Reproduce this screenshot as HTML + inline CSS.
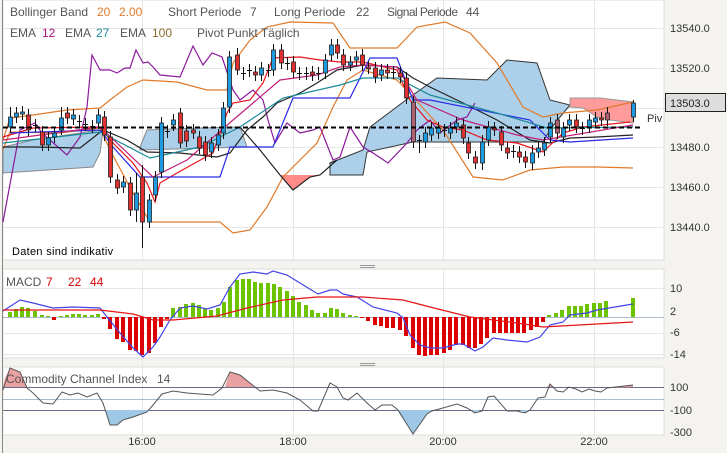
<!DOCTYPE html>
<html><head><meta charset="utf-8"><style>
html,body{margin:0;padding:0;width:727px;height:453px;overflow:hidden;background:#f4f3ef;font-family:"Liberation Sans",sans-serif}
svg{position:absolute;left:0;top:0}
</style></head><body>
<svg id="s" width="727" height="453" viewBox="0 0 727 453" xmlns="http://www.w3.org/2000/svg" font-family="Liberation Sans, sans-serif">
<rect x="3" y="0" width="661" height="260" fill="#fff" stroke="#ddd"/>
<rect x="3" y="269" width="661" height="89" fill="#fff" stroke="#ddd"/>
<rect x="3" y="367" width="661" height="68" fill="#fff" stroke="#ddd"/>
<line x1="2.5" y1="0" x2="2.5" y2="453" stroke="#888"/>
<g stroke="#e6e6e6" stroke-width="1">
<line x1="3" y1="28.5" x2="664" y2="28.5"/><line x1="3" y1="68.5" x2="664" y2="68.5"/><line x1="3" y1="108.5" x2="664" y2="108.5"/><line x1="3" y1="147.5" x2="664" y2="147.5"/><line x1="3" y1="187.5" x2="664" y2="187.5"/><line x1="3" y1="227.5" x2="664" y2="227.5"/>
<line x1="3" y1="288.5" x2="664" y2="288.5"/><line x1="3" y1="333.5" x2="664" y2="333.5"/><line x1="3" y1="354.5" x2="664" y2="354.5"/>
<line x1="142.5" y1="0" x2="142.5" y2="260"/><line x1="293.5" y1="0" x2="293.5" y2="260"/><line x1="443.5" y1="0" x2="443.5" y2="260"/><line x1="594.5" y1="0" x2="594.5" y2="260"/>
<line x1="142.5" y1="269" x2="142.5" y2="435"/><line x1="293.5" y1="269" x2="293.5" y2="435"/><line x1="443.5" y1="269" x2="443.5" y2="435"/><line x1="594.5" y1="269" x2="594.5" y2="435"/>
</g>
<polygon fill="#9fc8e6" fill-opacity="0.85" stroke="#888" points="3,147 33,140 100,130 103,130 100,153 93,167 3,173"/>
<polygon fill="#9fc8e6" fill-opacity="0.85" stroke="#888" points="140,147 147,130 200,128 240,127 247,147 140,150"/>
<polygon fill="#9fc8e6" fill-opacity="0.85" stroke="#333" points="330,163 363,150 370,127 410,97 437,78 487,80 507,60 537,63 550,100 570,105 560,117 550,130 543,142 413,142 367,152 363,175 330,175"/>
<polygon fill="#ff8a8a" fill-opacity="0.85" stroke="#999" points="570,98 600,98 633,102 633,123 610,120 597,117 583,108 570,107"/>
<polygon fill="#ff8a8a" points="280,175 320,175 310,177 293,190"/>
<g fill="none" stroke-width="1.2">
<polyline stroke="#e07a2a" points="3,140 10,118 33,115 67,110 100,108 110,100 127,87 143,80 177,82 207,90 227,90 233,63 250,40 267,27 290,22 333,23 350,48 397,48 417,27 445,22 470,33 497,63 523,107 543,117 563,113 597,110 633,102"/>
<polyline stroke="#e07a2a" points="3,150 10,132 60,133 100,128 110,150 133,193 150,222 220,222 233,233 250,230 267,207 283,177 317,143 333,107 347,80 363,70 397,80 413,97 443,130 473,177 503,180 530,170 563,167 597,167 633,168"/>
<polyline stroke="#8a1a9a" points="3,222 20,130 35,123 42,133 67,155 80,137 87,107 92,55 100,70 110,70 117,73 125,68 130,68 136,50 143,63 148,62 153,67 160,75 180,77 193,46 203,65 212,53 222,57 233,90 240,100 253,90 263,100 268,120 275,143 287,123 300,133 313,130 320,127 333,160 340,157 350,127 363,147 373,153 388,163 407,143 417,130 430,120 440,133 457,120 467,117 475,103"/>
<polyline stroke="#222" points="3,147 33,147 80,148 103,130 127,140 147,152 180,153 217,157 230,153 247,130 263,117 277,103 300,93 317,83 337,70 363,65 397,67 413,78 430,87 463,103 497,120 530,140 550,143 570,138 597,137 633,135"/>
<polyline stroke="#222" points="240,127 260,150 280,175 293,190 310,177 320,175 337,160 330,163"/>
<polyline stroke="#e8141e" points="3,137 33,128 100,127 110,140 133,163 147,183 155,202 160,183 177,173 213,153 227,113 233,103 250,100 263,83 273,58 300,57 320,60 340,62 363,62 397,70 410,100 427,120 443,127 463,130 487,140 517,143 543,152 563,133 583,127 630,122"/>
<polyline stroke="#2a2ae8" points="10,133 100,130 113,147 140,177 220,177 230,147 273,147 293,98 350,98 370,58 397,58 413,100 430,100 530,120 550,140 570,142 633,138"/>
<polyline stroke="#1a8a9a" points="3,143 100,132 150,158 200,147 240,127 283,98 340,85 363,78 397,78 430,95 497,113 547,128 633,127"/>
<polyline stroke="#c0207a" points="3,140 100,127 153,177 187,160 233,120 280,80 317,75 340,67 363,65 397,67 417,100 463,120 517,135 543,140 633,125"/>
</g>
<g id="candles"></g>
<line x1="3" y1="127.5" x2="640" y2="127.5" stroke="#000" stroke-width="2" stroke-dasharray="5,3"/>
<text x="647" y="122" font-size="11" fill="#333">Piv</text>
<rect x="665.5" y="93.5" width="60" height="18" fill="#ddd" stroke="#222"/>
<text x="670" y="107" font-size="11" fill="#222">13503.0</text>
<g font-size="11" fill="#333">
<text x="670" y="32">13540.0</text><text x="670" y="72">13520.0</text><text x="670" y="151">13480.0</text><text x="670" y="191">13460.0</text><text x="670" y="231">13440.0</text>
<text x="670" y="292">10</text><text x="670" y="315">2</text><text x="670" y="336">-6</text><text x="670" y="358">-14</text>
<text x="670" y="391">100</text><text x="670" y="414">-100</text><text x="670" y="436">-300</text>
<text x="142" y="445" text-anchor="middle">16:00</text><text x="293" y="445" text-anchor="middle">18:00</text><text x="443" y="445" text-anchor="middle">20:00</text><text x="594" y="445" text-anchor="middle">22:00</text>
</g>
<text x="12" y="255" font-size="11" fill="#000" letter-spacing="0.3">Daten sind indikativ</text>
<g font-size="12" fill="#555">
<text x="10" y="16">Bollinger Band</text><text x="97" y="16" fill="#e07a2a">20</text><text x="119" y="16" fill="#e07a2a">2.00</text>
<text x="168" y="16">Short Periode</text><text x="250" y="16">7</text>
<text x="274" y="16">Long Periode</text><text x="356" y="16">22</text>
<text x="387" y="16" textLength="71">Signal Periode</text><text x="466" y="16">44</text>
<text x="10" y="37">EMA</text><text x="42" y="37" fill="#b0107a">12</text>
<text x="65" y="37">EMA</text><text x="96" y="37" fill="#1a8a9a">27</text>
<text x="120" y="37">EMA</text><text x="152" y="37" fill="#8a6a2a">100</text>
<text x="197" y="37">Pivot Punkt  Täglich</text>
</g>
<line x1="3" y1="317.5" x2="664" y2="317.5" stroke="#aabbd0"/>
<g id="bars"></g>
<polyline fill="none" stroke="#4444e8" stroke-width="1.2" points="3,311 20,300 33,303 53,308 73,307 100,308 107,317 120,333 133,348 143,357 153,347 160,337 170,320 180,308 193,306 207,309 220,305 230,287 240,274 253,272 267,274 273,271 287,275 300,283 318,294 330,290 337,290 343,294 357,297 373,307 397,313 403,318 410,335 420,345 430,348 443,348 457,344 463,344 475,351 483,347 493,338 507,340 527,342 540,337 550,325 563,322 570,315 587,313 597,310 633,304"/>
<polyline fill="none" stroke="#e81414" stroke-width="1.2" points="3,310 100,310 133,314 153,320 173,320 217,316 247,308 283,300 317,297 363,297 403,300 430,307 470,317 517,323 543,327 633,322"/>
<text x="6" y="286" font-size="12" fill="#555">MACD</text><text x="46" y="286" font-size="12" fill="#d00">7</text><text x="68" y="286" font-size="12" fill="#d00">22</text><text x="90" y="286" font-size="12" fill="#d00">44</text>
<line x1="3" y1="387.5" x2="664" y2="387.5" stroke="#6a6a8a"/>
<line x1="3" y1="399.5" x2="664" y2="399.5" stroke="#aabbd0"/>
<line x1="3" y1="410.5" x2="664" y2="410.5" stroke="#6a6a8a"/>
<polygon fill="#e8a0a0" points="3,387 5,378 10,368 20,372 27,387"/>
<polygon fill="#e8a0a0" points="225,387 230,372 240,375 250,383 254,387"/>
<polygon fill="#e8a0a0" points="547,387 550,384 553,387"/>
<polygon fill="#e8a0a0" points="607,388 633,385 633,387"/>
<polygon fill="#9fc8e6" points="106,410 110,425 117,425 123,420 133,417 147,412 150,410"/>
<polygon fill="#9fc8e6" points="397,410 413,434 427,414 432,410"/>
<polygon fill="#9fc8e6" points="472,410 475,413 480,410"/>
<polygon fill="#9fc8e6" points="520,410 525,413 530,410"/>
<polyline fill="none" stroke="#555" stroke-width="1" points="3,390 10,368 20,372 27,388 33,393 43,403 53,404 62,392 70,395 78,393 87,397 97,393 103,403 110,425 117,425 123,420 133,417 147,412 153,405 162,394 173,391 187,393 200,394 213,395 222,388 230,372 240,375 250,383 260,391 273,390 287,393 300,400 313,411 318,411 330,383 337,387 343,398 348,400 357,393 367,403 375,410 382,405 392,405 398,410 413,434 427,414 432,411 457,404 467,408 475,413 482,411 488,397 494,396 507,411 517,411 525,413 530,410 538,398 545,397 550,384 557,391 563,392 569,387 576,389 582,392 589,389 595,391 601,392 607,388 633,385"/>
<text x="6" y="383" font-size="12" fill="#555">Commodity Channel Index</text><text x="157" y="383" font-size="12" fill="#555">14</text>
<g stroke="#999"><line x1="360" y1="265.5" x2="375" y2="265.5"/><line x1="360" y1="267.5" x2="375" y2="267.5"/><line x1="360" y1="363.5" x2="375" y2="363.5"/><line x1="360" y1="365.5" x2="375" y2="365.5"/></g>
</svg>
<script>
var NS="http://www.w3.org/2000/svg";
function el(p,t,a){var e=document.createElementNS(NS,t);for(var k in a)e.setAttribute(k,a[k]);p.appendChild(e);return e;}
var C=[[10,117,127,'b',107,133],[16,113,117,'b'],[22,112,114,'b'],[28,115,130,'r'],[35,125,126,'c'],[42,132,145,'r'],[48,138,145,'b'],[54,133,137,'b'],[61,118,130,'b',107,135],[67,113,118,'r'],[73,115,119,'b'],[79,121,122,'c'],[85,124,125,'c'],[92,126,127,'c'],[98,115,123,'b'],[104,117,135,'r'],[110,137,177,'r'],[117,180,188,'r'],[123,182,187,'b'],[130,183,210,'r'],[136,193,210,'b',173,222],[142,177,222,'r',165,248],[149,200,222,'b'],[155,177,195,'b'],[161,123,172,'b'],[167,131,132,'c'],[173,120,125,'b'],[180,113,143,'r',108,148],[186,131,141,'r'],[193,130,133,'r'],[199,137,148,'r'],[205,142,155,'r'],[211,143,152,'b'],[218,135,145,'b'],[223,108,133,'b'],[229,57,107,'b'],[237,55,70,'r',48,75],[243,73,74,'c'],[249,70,71,'c'],[255,72,75,'r'],[261,68,75,'b'],[268,70,71,'c'],[273,50,70,'b'],[281,50,63,'r'],[287,63,64,'c'],[293,62,72,'r'],[299,73,74,'c'],[306,73,74,'c'],[312,72,75,'r'],[318,73,74,'c'],[325,60,73,'b'],[331,45,55,'b'],[337,45,53,'r'],[343,55,65,'r'],[350,62,65,'b'],[356,57,60,'b'],[362,55,65,'r'],[368,67,68,'r'],[375,68,77,'r'],[381,70,75,'b'],[387,70,73,'r'],[393,72,73,'c'],[400,73,77,'r'],[406,78,98,'r'],[413,102,142,'g'],[419,140,141,'c',135,153],[425,133,142,'b'],[431,128,135,'b'],[438,128,133,'b'],[444,130,131,'c'],[450,128,133,'b'],[456,123,127,'b'],[463,125,138,'r'],[468,143,153,'r'],[475,157,163,'r'],[482,142,163,'b',135,170],[488,127,140,'b'],[494,128,130,'r'],[501,132,145,'r'],[507,148,153,'r'],[513,151,152,'c'],[519,152,157,'r'],[525,157,162,'r'],[532,153,163,'b',145,170],[538,148,152,'b'],[544,143,150,'b'],[550,123,137,'b'],[557,120,133,'g'],[563,128,137,'b'],[569,120,125,'b'],[576,120,127,'r'],[582,128,129,'c'],[589,120,127,'b'],[595,118,122,'b'],[601,118,120,'r'],[607,113,120,'g'],[633,103,117,'b',100,122]];
var g=document.getElementById('candles');
C.forEach(function(c){var x=c[0],t=c[1],b=c[2],w1=c[4]||t-6,w2=c[5]||b+6;
el(g,'line',{x1:x+0.5,y1:w1,x2:x+0.5,y2:w2,stroke:'#111','stroke-width':1});
var col=c[3]=='b'?'#1e9be0':c[3]=='r'?'#e23030':c[3]=='g'?'#b06070':'#111';
if(c[3]=='c'){el(g,'line',{x1:x-2,y1:t+0.5,x2:x+3,y2:t+0.5,stroke:'#111'});}
else el(g,'rect',{x:x-1.5,y:t,width:4,height:Math.max(2,b-t),fill:col,stroke:'#222','stroke-width':0.8});});
var B=[[10,312],[16,309],[22,307],[28,308],[35,311],[42,315],[48,316],[54,320],[61,316],[67,315],[73,314],[79,314],[85,315],[92,315],[98,314],[104,319],[110,329],[117,339],[123,342],[130,350],[136,351],[142,355],[149,353],[155,343],[161,327],[167,319],[173,308],[180,307],[186,304],[193,303],[199,305],[205,309],[211,310],[218,308],[224,302],[230,287],[237,280],[243,279],[249,279],[255,282],[261,283],[268,283],[274,284],[280,287],[287,291],[293,296],[299,302],[306,305],[312,310],[318,313],[325,313],[331,308],[337,309],[343,313],[350,315],[356,316],[362,318],[368,321],[375,325],[381,326],[387,328],[393,328],[400,330],[406,336],[413,348],[419,355],[425,356],[431,355],[437,355],[444,353],[450,350],[456,345],[463,345],[469,348],[475,348],[481,344],[487,338],[494,333],[500,333],[506,333],[512,333],[518,333],[524,333],[531,330],[537,327],[543,322],[549,315],[556,313],[562,310],[569,306],[575,306],[581,306],[587,304],[594,303],[600,303],[606,301],[633,298]];
var gb=document.getElementById('bars');
B.forEach(function(b){var x=b[0],y=b[1],z=317;
if(y<z)el(gb,'rect',{x:x-2,y:y,width:4,height:z-y,fill:'#6cc400'});
else el(gb,'rect',{x:x-2,y:z,width:4,height:Math.max(1,y-z),fill:'#dd0000'});});
</script>
</body></html>
